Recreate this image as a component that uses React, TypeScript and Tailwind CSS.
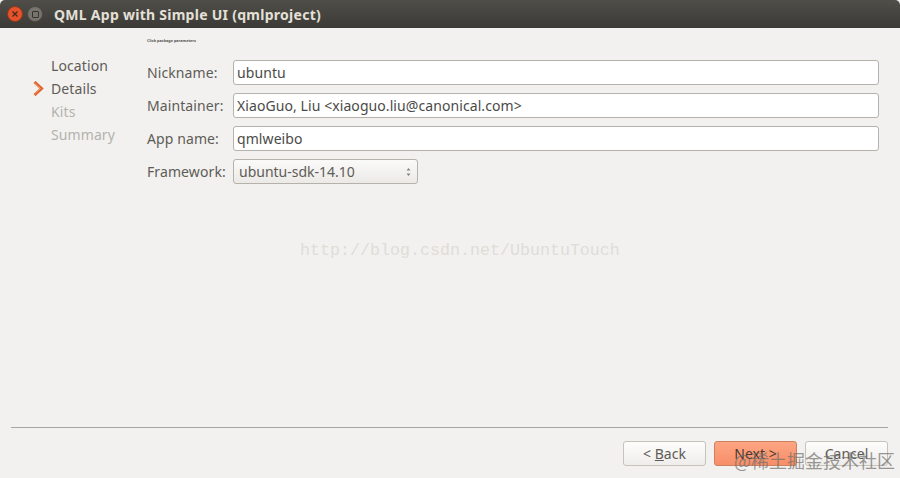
const ui = { fontFamily: '"Noto Sans", "Open Sans", sans-serif' };

const steps = [
  { label: "Location", active: true, current: false },
  { label: "Details", active: true, current: true },
  { label: "Kits", active: false, current: false },
  { label: "Summary", active: false, current: false },
];

const fields = [
  { label: "Nickname:", value: "ubuntu" },
  { label: "Maintainer:", value: "XiaoGuo, Liu <xiaoguo.liu@canonical.com>" },
  { label: "App name:", value: "qmlweibo" },
];

function WindowButtons() {
  return (
    <div className="flex items-center gap-[4px]">
      <div className="w-[16px] h-[16px] rounded-full bg-[#e8522a] border border-[#8a3a20] flex items-center justify-center">
        <svg width="8" height="8" viewBox="0 0 8 8">
          <path d="M1.5 1.5 L6.5 6.5 M6.5 1.5 L1.5 6.5" stroke="#4a2a20" strokeWidth="1.4" />
        </svg>
      </div>
      <div className="w-[16px] h-[16px] rounded-full bg-[#76746c] border border-[#4a4943] flex items-center justify-center">
        <div className="w-[7px] h-[7px] border border-[#35342f] rounded-[1px]" />
      </div>
    </div>
  );
}

function Field({ label, value }: { label: string; value: string }) {
  return (
    <div className="flex items-center h-[25px]">
      <div className="w-[86px] text-[#5e5c57] text-[14px] tracking-[0.1px]">{label}</div>
      <div className="flex-1 h-[25px] bg-white border border-[#b5b1ab] rounded-[3px] pl-[3px] flex items-center text-[#4a4a48] text-[14px] tracking-[0.08px]">
        {value}
      </div>
    </div>
  );
}

function Button({ children, primary }: { children: React.ReactNode; primary?: boolean }) {
  return (
    <button
      className={
        primary
          ? "w-[83px] h-[25px] rounded-[3px] border border-[#cf8060] bg-gradient-to-b from-[#fda583] to-[#f78e68] text-[#4a3a30] text-[14px] flex items-center justify-center"
          : "w-[83px] h-[25px] rounded-[3px] border border-[#c6c3bd] bg-gradient-to-b from-[#fdfdfc] to-[#efedeb] text-[#5e5c57] text-[14px] flex items-center justify-center"
      }
    >
      {children}
    </button>
  );
}

export default function App() {
  return (
    <div className="relative w-[900px] h-[478px] overflow-hidden bg-[#f2f1ef] flex flex-col" style={ui}>
      {/* title bar */}
      <div className="h-[28px] shrink-0 rounded-t-[5px] bg-gradient-to-b from-[#4f4e49] to-[#3b3a36] flex items-center pl-[7px]">
        <WindowButtons />
        <div className="ml-[11px] text-[#e4e0d8] text-[14px] font-bold tracking-[0.27px]">
          QML App with Simple UI (qmlproject)
        </div>
      </div>

      <div className="flex-1 flex min-h-0">
        {/* wizard steps */}
        <div className="w-[147px] shrink-0 pt-[26px] pl-[33px]">
          {steps.map((s) => (
            <div key={s.label} className="flex items-center h-[23px]">
              <div className="w-[18px] shrink-0">
                {s.current && (
                  <svg width="11" height="15" viewBox="0 0 11 15">
                    <path d="M1.5 1 L8.5 7.5 L1.5 14" fill="none" stroke="#e0622c" strokeWidth="3" />
                    <path d="M1.5 2 L7.5 7.5 L1.5 13" fill="none" stroke="#f3a070" strokeWidth="1" />
                  </svg>
                )}
              </div>
              <span className={s.active ? "text-[14px] text-[#5e5c57] tracking-[0.1px]" : "text-[14px] text-[#b4b2ae] tracking-[0.1px]"}>
                {s.label}
              </span>
            </div>
          ))}
        </div>

        {/* form */}
        <div className="flex-1 pr-[21px] pt-[10px]">
          <div className="text-[3.8px] leading-[6px] h-[6px] font-bold text-[#55534f]">Click package parameters</div>
          <div className="mt-[16px] flex flex-col gap-[8px]">
            {fields.map((f) => (
              <Field key={f.label} label={f.label} value={f.value} />
            ))}
            <div className="flex items-center h-[25px]">
              <div className="w-[86px] text-[#5e5c57] text-[14px] tracking-[0.1px]">Framework:</div>
              <div className="w-[185px] h-[25px] bg-gradient-to-b from-[#fafaf9] to-[#eceae7] border border-[#b5b1ab] rounded-[3px] pl-[5px] pr-[5px] flex items-center justify-between text-[#5e5c57] text-[14px]">
                <span>ubuntu-sdk-14.10</span>
                <svg width="7" height="12" viewBox="0 0 7 12">
                  <path d="M3.5 2 L5.5 4.5 H1.5 Z M3.5 10 L5.5 7.5 H1.5 Z" fill="#85837e" />
                </svg>
              </div>
            </div>
          </div>
        </div>
      </div>

      {/* footer */}
      <div className="shrink-0 h-[51px] mx-[11px] mr-[12px] border-t border-[#a8a6a2] flex items-start justify-end gap-[8px] pt-[13px]">
        <Button>
          &lt;&nbsp;<span className="underline">B</span>ack
        </Button>
        <Button primary>Next &gt;</Button>
        <Button>Cancel</Button>
      </div>

      {/* blog watermarks */}
      <div
        className="absolute left-[300px] top-[240px] text-[16.67px] leading-[22px] text-[#dfddd8] whitespace-nowrap"
        style={{ fontFamily: '"Liberation Mono", monospace' }}
      >
        http://blog.csdn.net/UbuntuTouch
      </div>
      <div
        className="absolute left-[734px] top-[449px] text-[18px] leading-[22px] text-[#6f6d69]/70 whitespace-nowrap"
        style={{ fontFamily: '"Noto Sans CJK SC", sans-serif' }}
      >
        @稀土掘金技术社区
      </div>
    </div>
  );
}
